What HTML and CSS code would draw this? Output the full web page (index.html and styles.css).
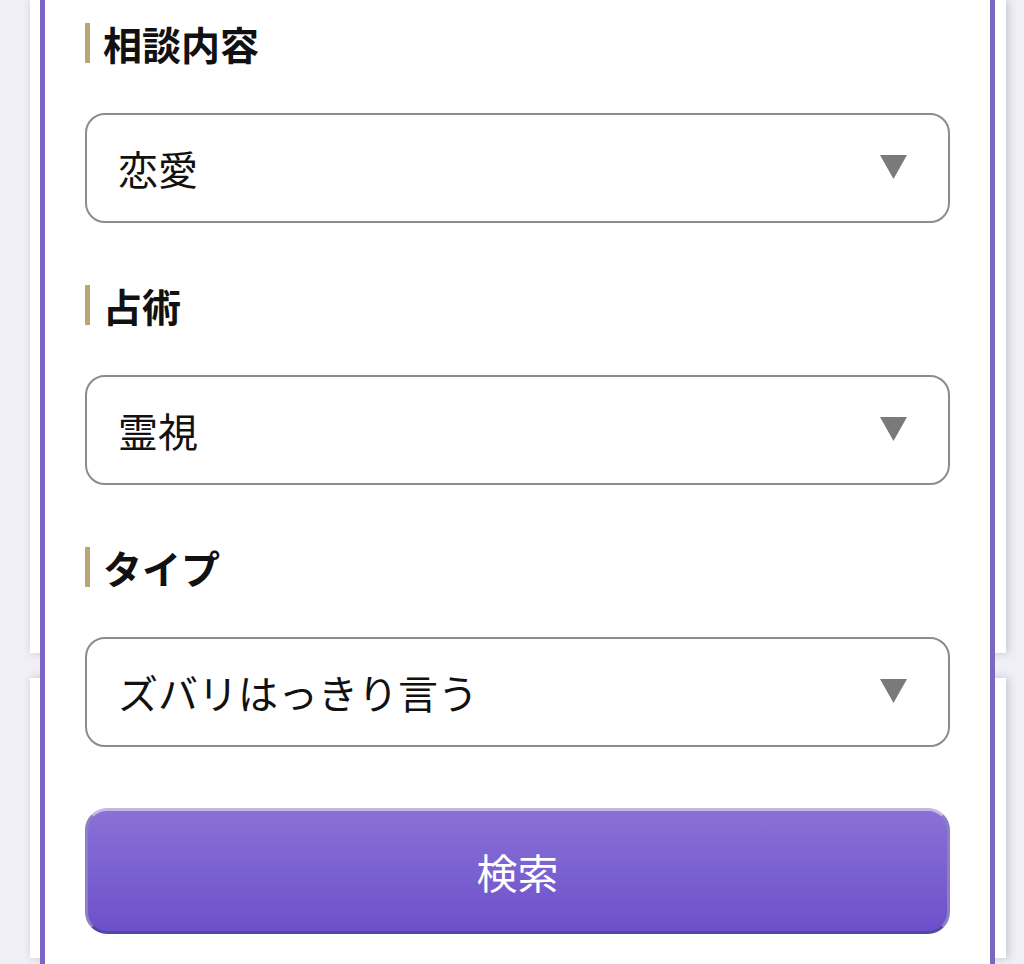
FILE: index.html
```html
<!DOCTYPE html>
<html lang="ja">
<head>
<meta charset="utf-8">
<title>検索</title>
<link rel="stylesheet" href="styles.css">
</head>
<body>
<div class="backdrop">
  <div class="bgcard bgcard-top"></div>
  <div class="bgcard bgcard-bottom"></div>
</div>
<div class="modal">
  <form class="search-form">
    <section class="field">
      <h2 class="field-title">相談内容</h2>
      <div class="select">
        <span class="select-value">恋愛</span>
        <svg class="select-arrow" width="27" height="24" viewBox="0 0 27 24"><polygon points="0,0 27,0 13.5,24" fill="#7a7a7a"/></svg>
      </div>
    </section>
    <section class="field">
      <h2 class="field-title">占術</h2>
      <div class="select">
        <span class="select-value">霊視</span>
        <svg class="select-arrow" width="27" height="24" viewBox="0 0 27 24"><polygon points="0,0 27,0 13.5,24" fill="#7a7a7a"/></svg>
      </div>
    </section>
    <section class="field">
      <h2 class="field-title">タイプ</h2>
      <div class="select">
        <span class="select-value">ズバリはっきり言う</span>
        <svg class="select-arrow" width="27" height="24" viewBox="0 0 27 24"><polygon points="0,0 27,0 13.5,24" fill="#7a7a7a"/></svg>
      </div>
    </section>
    <button type="button" class="search-button">検索</button>
  </form>
</div>
</body>
</html>
```
FILE: styles.css
```css
html, body {
  margin: 0;
  padding: 0;
}
body {
  width: 1024px;
  height: 964px;
  overflow: hidden;
  background: #f0eff6;
  font-family: "Noto Sans CJK JP", "Noto Sans", sans-serif;
  position: relative;
}
.backdrop {
  display: flex;
  flex-direction: column;
  gap: 25px;
  padding: 0 18px 0 30px;
}
.bgcard {
  background: #ffffff;
  box-shadow: 2px 0 8px rgba(60, 50, 90, 0.24);
}
.bgcard-top {
  height: 653px;
}
.bgcard-bottom {
  height: 280px;
}
.modal {
  position: absolute;
  top: -20px;
  left: 40px;
  width: 945px;
  height: 984px;
  background: #ffffff;
  border-left: 5px solid #7b67c3;
  border-right: 5px solid #7b67c3;
}
.search-form {
  display: flex;
  flex-direction: column;
  padding: 43px 40px 0 40px;
}
.field {
  display: flex;
  flex-direction: column;
  gap: 50px;
  margin-bottom: 62px;
}
.field:last-of-type {
  margin-bottom: 61px;
}
.field-title {
  margin: 0;
  height: 40px;
  line-height: 40px;
  font-size: 39px;
  font-weight: 700;
  color: #111111;
  border-left: 5px solid #b9a673;
  padding-left: 13px;
  display: flex;
  align-items: center;
}
.select {
  box-sizing: border-box;
  height: 110px;
  border: 2px solid #8c8c8c;
  border-radius: 20px;
  display: flex;
  align-items: center;
  justify-content: space-between;
  padding: 0 41px 0 31px;
}
.select-value {
  font-size: 40px;
  color: #111111;
  line-height: 1;
}
.select-arrow {
  display: block;
  margin-top: -2px;
}
.search-button {
  box-sizing: border-box;
  height: 126px;
  width: 100%;
  border-radius: 22px;
  border: 3px solid #8c80c4;
  border-top-color: #c3b9e0;
  border-bottom-color: #4b49a5;
  background: linear-gradient(to bottom, #8a70d6 0%, #7a5fd0 55%, #6e4fca 100%);
  color: #ffffff;
  font-family: "Noto Sans CJK JP", "Noto Sans", sans-serif;
  font-size: 41px;
  font-weight: 400;
  padding: 0;
}
```
